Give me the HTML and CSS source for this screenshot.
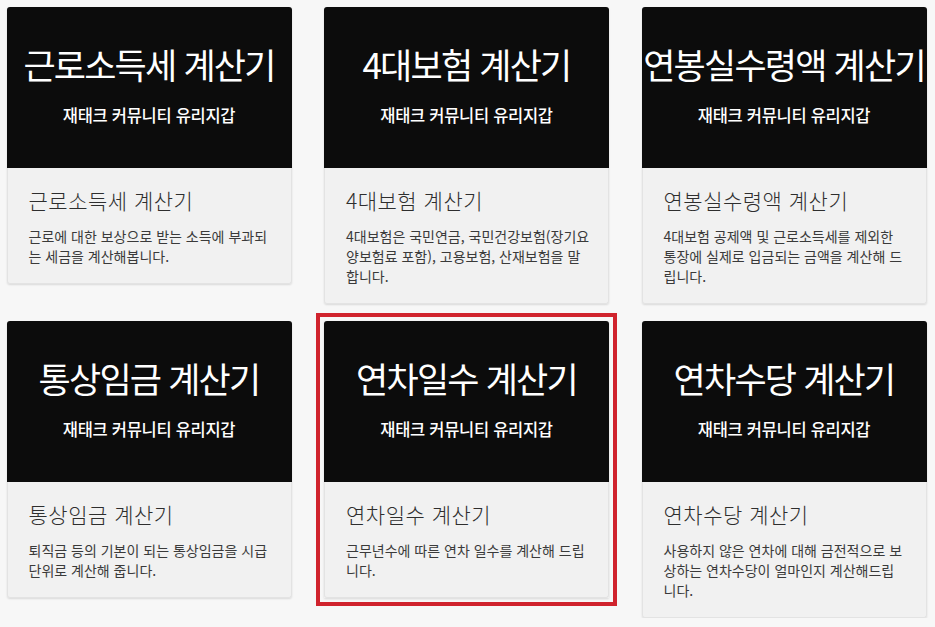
FILE: index.html
```html
<!DOCTYPE html>
<html lang="ko">
<head>
<meta charset="utf-8">
<title>계산기 모음</title>
<link rel="stylesheet" href="styles.css">
</head>
<body>
<div class="grid">
  <div class="card">
    <div class="head"><div class="head-title">근로소득세 계산기</div><div class="head-sub">재태크 커뮤니티 유리지갑</div></div>
    <div class="body"><div class="title">근로소득세 계산기</div><p class="desc">근로에 대한 보상으로 받는 소득에 부과되<br>는 세금을 계산해봅니다.</p></div>
  </div>
  <div class="card">
    <div class="head"><div class="head-title">4대보험 계산기</div><div class="head-sub">재태크 커뮤니티 유리지갑</div></div>
    <div class="body"><div class="title">4대보험 계산기</div><p class="desc">4대보험은 국민연금, 국민건강보험(장기요<br>양보험료 포함), 고용보험, 산재보험을 말<br>합니다.</p></div>
  </div>
  <div class="card">
    <div class="head"><div class="head-title">연봉실수령액 계산기</div><div class="head-sub">재태크 커뮤니티 유리지갑</div></div>
    <div class="body"><div class="title">연봉실수령액 계산기</div><p class="desc">4대보험 공제액 및 근로소득세를 제외한<br>통장에 실제로 입금되는 금액을 계산해 드<br>립니다.</p></div>
  </div>
  <div class="card">
    <div class="head"><div class="head-title">통상임금 계산기</div><div class="head-sub">재태크 커뮤니티 유리지갑</div></div>
    <div class="body"><div class="title">통상임금 계산기</div><p class="desc">퇴직금 등의 기본이 되는 통상임금을 시급<br>단위로 계산해 줍니다.</p></div>
  </div>
  <div class="card card-selected">
    <div class="head"><div class="head-title">연차일수 계산기</div><div class="head-sub">재태크 커뮤니티 유리지갑</div></div>
    <div class="body"><div class="title">연차일수 계산기</div><p class="desc">근무년수에 따른 연차 일수를 계산해 드립<br>니다.</p></div>
  </div>
  <div class="card">
    <div class="head"><div class="head-title">연차수당 계산기</div><div class="head-sub">재태크 커뮤니티 유리지갑</div></div>
    <div class="body"><div class="title">연차수당 계산기</div><p class="desc">사용하지 않은 연차에 대해 금전적으로 보<br>상하는 연차수당이 얼마인지 계산해드립<br>니다.</p></div>
  </div>
</div>
</body>
</html>
```
FILE: styles.css
```css
html, body {
  margin: 0;
  padding: 0;
  background: #f7f7f7;
  font-family: "Noto Sans CJK KR", "Noto Sans", sans-serif;
}
.grid {
  display: grid;
  grid-template-columns: repeat(3, 285px);
  column-gap: 32.5px;
  row-gap: 17px;
  align-items: start;
  padding: 7px 0 0 6.5px;
}
.card {
  background: #f1f1f1;
  border-radius: 3px;
  box-shadow: 0 1px 2px rgba(0, 0, 0, 0.12);
}
.card-selected {
  border-radius: 0;
  outline: 4px solid #d0232d;
  outline-offset: 4px;
}
.head {
  height: 156px;
  padding-bottom: 5px;
  background: #0c0c0c;
  border-radius: 3px 3px 0 0;
  color: #fff;
  display: flex;
  flex-direction: column;
  align-items: center;
  justify-content: center;
  gap: 20px;
  text-align: center;
}
.head-title {
  font-size: 35px;
  line-height: 40px;
  letter-spacing: -1.8px;
  white-space: nowrap;
}
.head-sub {
  font-size: 16.5px;
  line-height: 22px;
  font-weight: 500;
  letter-spacing: -0.3px;
}
.body {
  padding: 18px 21px 17px;
  border: 1px solid #e3e3e3;
  border-top: none;
  border-radius: 0 0 3px 3px;
}
.title {
  font-size: 21px;
  line-height: 28px;
  font-weight: 300;
  color: #2e2e2e;
  letter-spacing: 0.5px;
  margin-bottom: 12px;
}
.desc {
  margin: 0;
  font-size: 14px;
  line-height: 20px;
  color: #3a3a3a;
  white-space: nowrap;
}
```
